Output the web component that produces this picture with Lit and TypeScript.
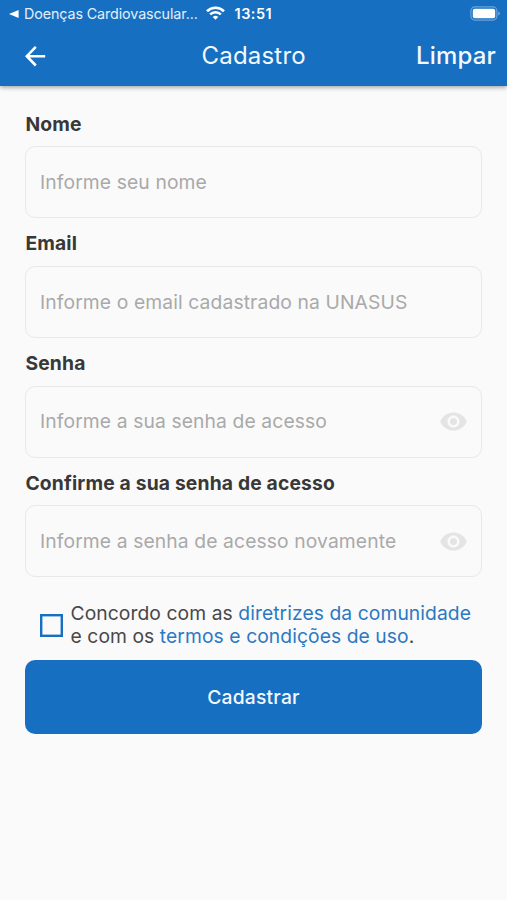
import { LitElement, html, css, nothing } from "lit";
import { customElement, property } from "lit/decorators.js";

@customElement("status-bar")
class StatusBar extends LitElement {
  static styles = css`
    :host { display: flex; align-items: center; height: 28px; padding: 0 7px 0 9px; color: #fff; }
    .back { width: 10px; height: 8px; margin-right: 5px; }
    .app { font-size: 14.3px; line-height: 18px; padding-bottom: 1px; letter-spacing: -0.1px; color: #e3effa; white-space: nowrap; width: 176px; }
    .wifi { width: 19px; height: 14px; margin: -2px 9px 0 6px; }
    .time { font-size: 14.5px; line-height: 18px; padding-bottom: 1px; font-weight: 600; letter-spacing: 0.5px; margin-left: 0.5px; }
    .battery { width: 30px; height: 15px; margin: -1px 0 0 auto; }
  `;
  render() {
    return html`
      <svg class="back" viewBox="0 0 10 8"><path d="M0 4L9.6 0V8Z" fill="#fff" /></svg>
      <span class="app">Doenças Cardiovascular...</span>
      <svg class="wifi" viewBox="0 0 19 14" fill="none" stroke="#fff">
        <path d="M1 5.2A12.2 12.2 0 0 1 18 5.2" stroke-width="2.7" />
        <path d="M4.1 8.4A7.8 7.8 0 0 1 14.9 8.4" stroke-width="2.5" />
        <path d="M9.5 13.8L6.7 11A4 4 0 0 1 12.3 11Z" fill="#fff" stroke="none" />
      </svg>
      <span class="time">13:51</span>
      <svg class="battery" viewBox="0 0 30 15">
        <rect x="0.9" y="0.9" width="26" height="13.2" rx="4" fill="none" stroke="#6ba5da" stroke-width="1.2" />
        <rect x="2.8" y="2.8" width="22.4" height="9.4" rx="2" fill="#fff" />
        <path d="M28.2 5.4Q30 6 30 7.5T28.2 9.6Z" fill="#6ba5da" />
      </svg>
    `;
  }
}

@customElement("form-field")
class FormField extends LitElement {
  @property() label = "";
  @property() hint = "";
  @property({ type: Boolean }) secret = false;
  static styles = css`
    :host { display: flex; flex-direction: column; height: 119.7px; }
    .label { height: 24px; line-height: 24px; margin-bottom: 10.6px; padding-left: 0.4px; font-size: 19.3px; font-weight: 650; letter-spacing: 0.16px; color: #383838; white-space: nowrap; }
    .box { box-sizing: border-box; height: 72px; display: flex; align-items: center; justify-content: space-between; padding: 0 13px 0 14px; border: 1px solid #e8e8e8; border-radius: 10px; }
    .hint { font-size: 19.3px; line-height: 24px; padding-bottom: 1px; color: #a9a9a9; letter-spacing: 0.11px; white-space: nowrap; }
    .eye { width: 29px; height: 29px; }
  `;
  render() {
    return html`
      <div class="label">${this.label}</div>
      <div class="box">
        <span class="hint">${this.hint}</span>
        ${this.secret
          ? html`<svg class="eye" viewBox="0 0 24 24" fill="#e4e4e4"><path d="M12 4.5C7 4.5 2.73 7.61 1 12c1.73 4.39 6 7.5 11 7.5s9.27-3.11 11-7.5c-1.73-4.39-6-7.5-11-7.5zM12 17c-2.76 0-5-2.24-5-5s2.24-5 5-5 5 2.24 5 5-2.24 5-5 5zm0-8c-1.66 0-3 1.34-3 3s1.34 3 3 3 3-1.34 3-3-1.34-3-3-3z" /></svg>`
          : nothing}
      </div>
    `;
  }
}

@customElement("app-root")
class AppRoot extends LitElement {
  static styles = css`
    :host { display: block; height: 900px; overflow: hidden; background: #fafafa; font-family: Inter, "Liberation Sans", sans-serif; }
    .header { height: 86px; background: #166fc1; box-shadow: 0 1px 5px rgba(0, 0, 0, 0.42); }
    .nav { height: 56px; display: grid; grid-template-columns: 176.5px 1fr auto; align-items: center; padding: 0 11px 0 25px; color: #f3f9ff; }
    .arrow { width: 21px; height: 21px; }
    .title, .clear { font-size: 24px; line-height: 30px; padding-bottom: 1px; letter-spacing: 0.2px; }
    .clear { font-weight: 500; }
    .form { padding: 25.8px 25px 0; }
    .consent { display: flex; align-items: center; gap: 8px; height: 48px; margin-top: 10.8px; padding-left: 14.5px; }
    .check { width: 23px; height: 23px; flex: none; }
    .terms { font-size: 19.3px; line-height: 23px; letter-spacing: 0.07px; color: #484848; white-space: nowrap; }
    .link { color: #2b79c2; }
    .submit { display: flex; align-items: center; justify-content: center; height: 73.4px; margin-top: 11px; border-radius: 10px; background: #166fc1; color: #f3f9ff; font-size: 19.3px; font-weight: 500; letter-spacing: 0.2px; }
  `;
  render() {
    return html`
      <div class="header">
        <status-bar></status-bar>
        <div class="nav">
          <svg class="arrow" viewBox="0 0 21 21" fill="none" stroke="#fff" stroke-width="2.6"><path d="M20.2 10.2H2.2M10.8 0.9L1.8 10.2L10.8 19.5" /></svg>
          <span class="title">Cadastro</span>
          <span class="clear">Limpar</span>
        </div>
      </div>
      <div class="form">
        <form-field label="Nome" hint="Informe seu nome"></form-field>
        <form-field label="Email" hint="Informe o email cadastrado na UNASUS"></form-field>
        <form-field label="Senha" hint="Informe a sua senha de acesso" secret></form-field>
        <form-field label="Confirme a sua senha de acesso" hint="Informe a senha de acesso novamente" secret></form-field>
        <div class="consent">
          <svg class="check" viewBox="0 0 23 23"><rect x="1.2" y="1.2" width="20.6" height="20.6" fill="none" stroke="#166fc1" stroke-width="2.4" /></svg>
          <div class="terms">
            Concordo com as <span class="link">diretrizes da comunidade</span><br />
            e com os <span class="link">termos e condições de uso</span>.
          </div>
        </div>
        <div class="submit">Cadastrar</div>
      </div>
    `;
  }
}
